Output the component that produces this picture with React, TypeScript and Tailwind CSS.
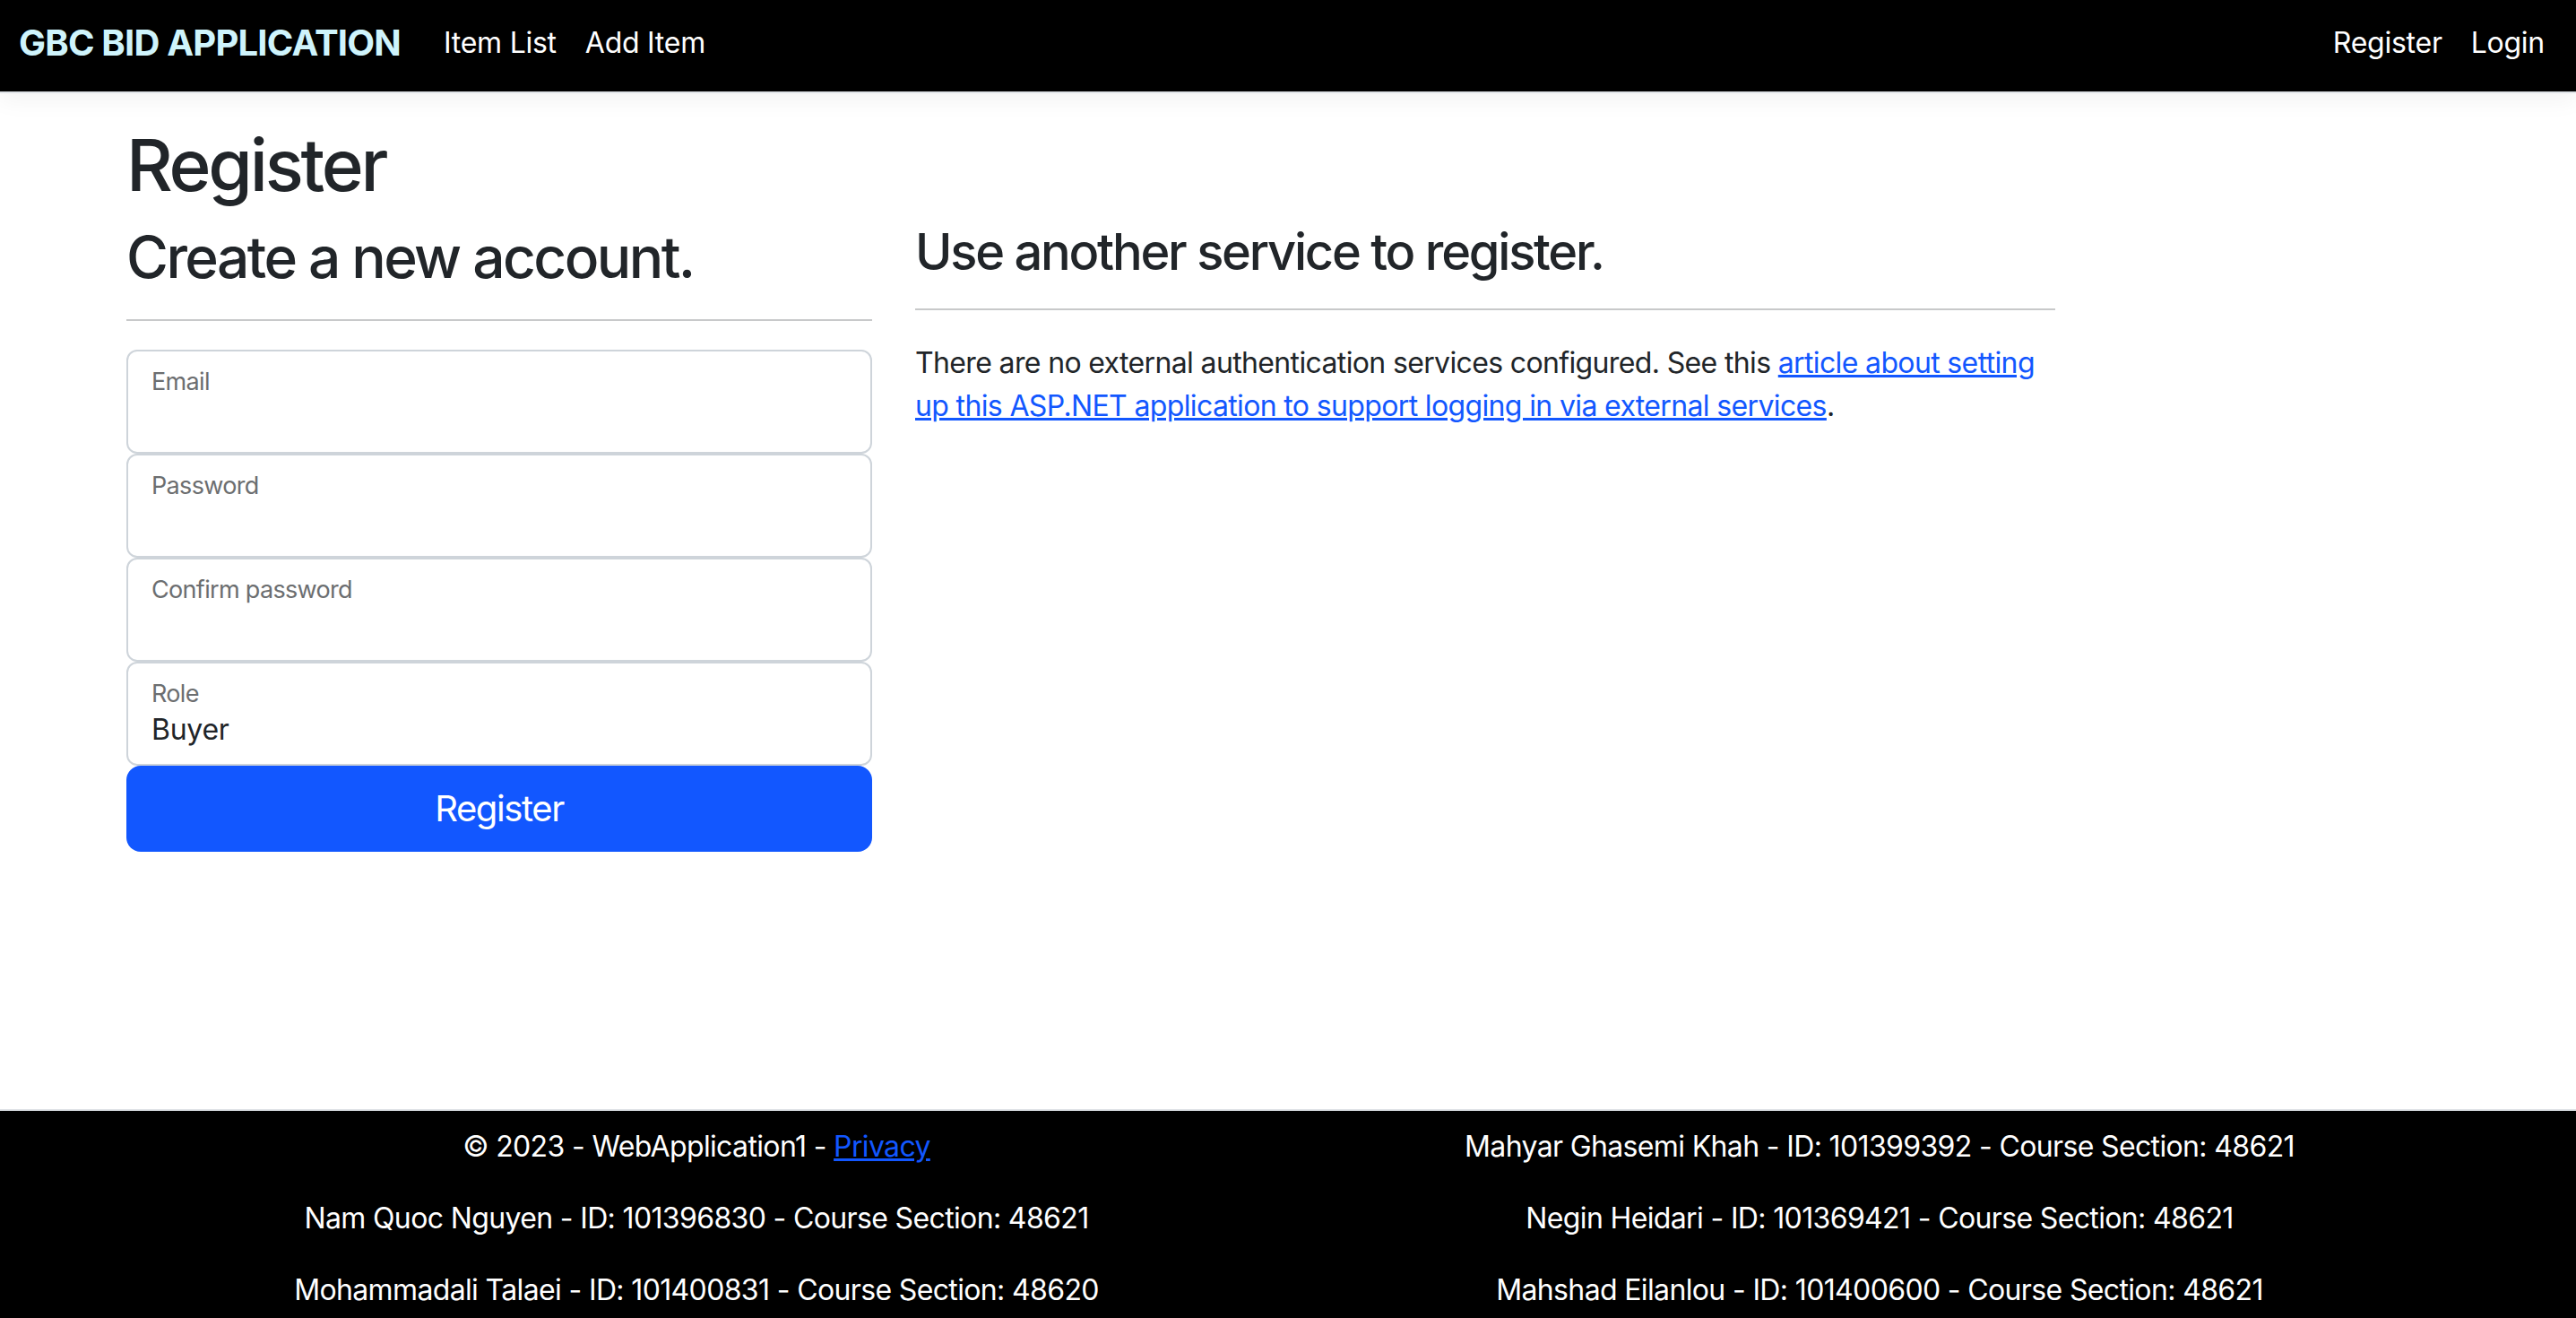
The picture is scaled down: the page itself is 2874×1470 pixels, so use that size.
import React from "react";

const FONT = "font-['Inter','Liberation_Sans',sans-serif]";

function FloatingField({ label, value }: { label: string; value?: string }) {
  return (
    <div className="h-[116px] rounded-[12px] border-2 border-[#ced4da] bg-white px-[26px] pt-[14px] flex flex-col">
      <span className="text-[27px] leading-[40px] tracking-[-0.025em] text-[#6c6e70]">{label}</span>
      {value && <span className="text-[32px] leading-[40px] text-[#212529]">{value}</span>}
    </div>
  );
}

const members = {
  left: [
    "Nam Quoc Nguyen - ID: 101396830 - Course Section: 48621",
    "Mohammadali Talaei - ID: 101400831 - Course Section: 48620",
  ],
  right: [
    "Mahyar Ghasemi Khah - ID: 101399392 - Course Section: 48621",
    "Negin Heidari - ID: 101369421 - Course Section: 48621",
    "Mahshad Eilanlou - ID: 101400600 - Course Section: 48621",
  ],
};

export default function App() {
  return (
    <div className={`h-[1470px] overflow-hidden flex flex-col bg-white text-[#212529] tracking-[-0.016em] ${FONT}`}>
      {/* Navbar */}
      <header className="h-[104px] shrink-0 bg-black border-b-2 border-[#dee2e6] shadow-[0_8px_24px_rgba(0,0,0,0.05)] px-[21px] flex items-center">
        <a href="#" className="text-[40px] font-bold tracking-[-0.02em] text-[#cff4fc] mr-[32px] pb-[6px]">GBC BID APPLICATION</a>
        <nav className="flex items-center flex-1 pb-[6px]">
          <a href="#" className="px-[16px] text-[32px] text-white">Item List</a>
          <a href="#" className="px-[16px] text-[32px] text-white">Add Item</a>
          <div className="ml-auto flex items-center">
            <a href="#" className="px-[16px] text-[32px] text-white">Register</a>
            <a href="#" className="pl-[16px] pr-[14px] text-[32px] text-white">Login</a>
          </div>
        </nav>
      </header>

      {/* Main */}
      <main className="flex-1 ml-[141px] w-[2592px] pt-[32px]">
        <h1 className="text-[80px] leading-[96px] font-medium tracking-[-0.04em] mb-[16px]">Register</h1>
        <div className="flex gap-[48px]">
          <div className="w-[832px]">
            <h2 className="text-[64px] leading-[77px] font-medium tracking-[-0.04em] mb-[16px]">Create a new account.</h2>
            <hr className="mt-[31px] mb-[32px] border-t-2 border-[#c8c9ca]" />
            <FloatingField label="Email" />
            <FloatingField label="Password" />
            <FloatingField label="Confirm password" />
            <FloatingField label="Role" value="Buyer" />
            <button className="w-full h-[96px] rounded-[16px] bg-[#1257ff] text-white text-[40px] tracking-[-0.035em]">Register</button>
          </div>
          <section className="w-[1272px]">
            <h3 className="text-[56px] leading-[67px] font-medium tracking-[-0.04em] mb-[16px]">Use another service to register.</h3>
            <hr className="mt-[29px] mb-[35px] border-t-2 border-[#c8c9ca]" />
            <p className="text-[32px] leading-[48px] tracking-[-0.02em]">
              There are no external authentication services configured. See this{" "}
              <a href="#" className="text-[#1257ff] underline">
                article about setting up this ASP.NET application to support logging in via external services
              </a>
              .
            </p>
          </section>
        </div>
      </main>

      {/* Footer */}
      <footer className="h-[233px] shrink-0 bg-black border-t-2 border-[#dee2e6] pt-[16px] text-white text-[32px] leading-[48px] tracking-[-0.02em]">
        <div className="ml-[141px] w-[2592px] grid grid-cols-2 gap-x-[48px] text-center">
          <div>
            <p className="mb-[32px]">
              © 2023 - WebApplication1 - <a href="#" className="text-[#1257ff] underline">Privacy</a>
            </p>
            {members.left.map(m => <p key={m} className="mb-[32px]">{m}</p>)}
          </div>
          <div>
            {members.right.map(m => <p key={m} className="mb-[32px]">{m}</p>)}
          </div>
        </div>
      </footer>
    </div>
  );
}
